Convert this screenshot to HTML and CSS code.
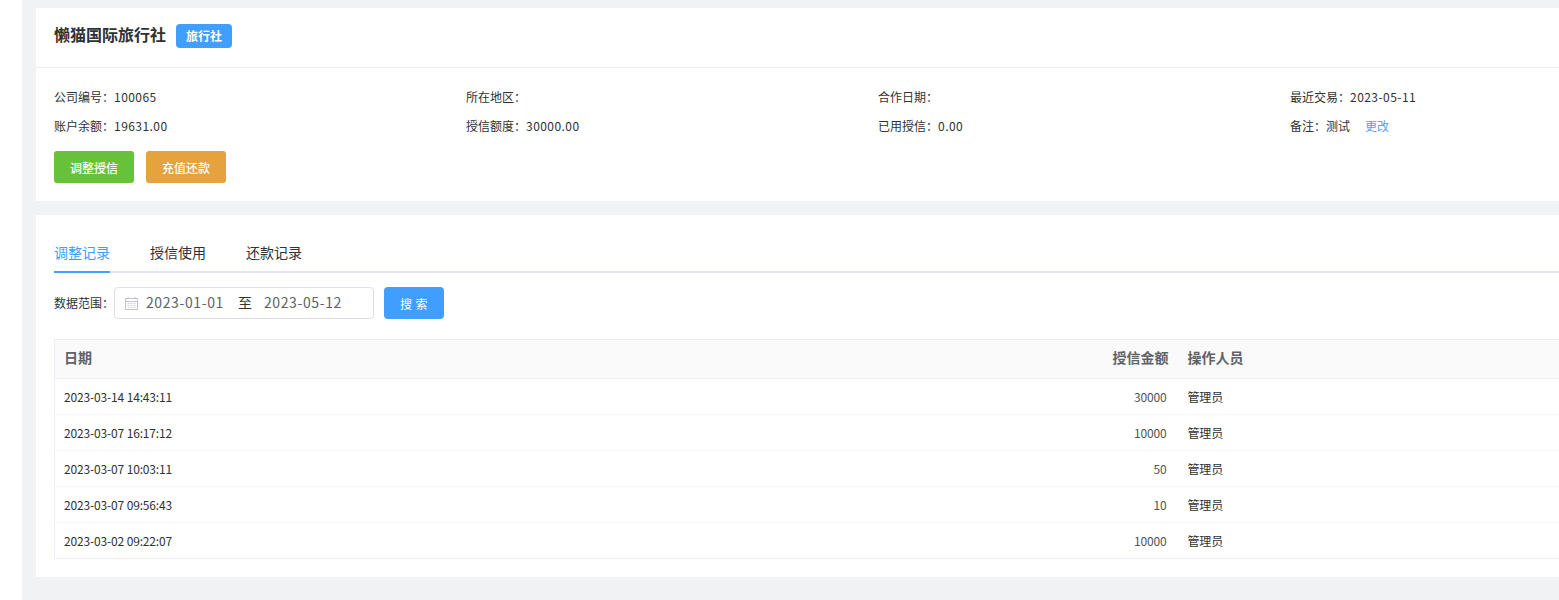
FILE: index.html
```html
<!DOCTYPE html>
<html lang="zh">
<head>
<meta charset="utf-8">
<title>懒猫国际旅行社</title>
<link rel="stylesheet" href="styles.css">
</head>
<body>
<div class="app">
  <aside class="side"></aside>
  <main class="main">
    <section class="card info">
      <header class="head">
        <h1 class="name">懒猫国际旅行社</h1>
        <span class="tag">旅行社</span>
      </header>
      <div class="body">
        <div class="grid">
          <div class="item">公司编号：<span class="val">100065</span></div>
          <div class="item">所在地区：</div>
          <div class="item">合作日期：</div>
          <div class="item">最近交易：<span class="val">2023-05-11</span></div>
          <div class="item">账户余额：<span class="val">19631.00</span></div>
          <div class="item">授信额度：<span class="val">30000.00</span></div>
          <div class="item">已用授信：<span class="val">0.00</span></div>
          <div class="item">备注：测试<a class="link">更改</a></div>
        </div>
        <div class="actions">
          <button class="btn green">调整授信</button>
          <button class="btn orange">充值还款</button>
        </div>
      </div>
    </section>
    <section class="card records">
      <nav class="tabs">
        <a class="tab active">调整记录</a>
        <a class="tab">授信使用</a>
        <a class="tab">还款记录</a>
      </nav>
      <form class="filter">
        <label class="filter-label">数据范围：</label>
        <div class="range">
          <svg class="cal" width="13" height="13" viewBox="0 0 13 13" fill="none" stroke="#c0c4cc">
            <rect x="0.5" y="1.5" width="12" height="11"/>
            <path d="M0.5 4.5h12"/>
            <path d="M3 0v2M10 0v2" />
            <path d="M2.5 6.5h2M5.5 6.5h2M8.5 6.5h2M2.5 8.5h2M5.5 8.5h2M8.5 8.5h2M2.5 10.5h2M5.5 10.5h2M8.5 10.5h2" stroke-width="0.8"/>
          </svg>
          <span class="date">2023-01-01</span>
          <span class="sep">至</span>
          <span class="date">2023-05-12</span>
        </div>
        <button type="button" class="search">搜 索</button>
      </form>
      <table class="table">
        <colgroup>
          <col class="c1"><col class="c2"><col class="c3">
        </colgroup>
        <thead>
          <tr><th>日期</th><th class="num">授信金额</th><th>操作人员</th></tr>
        </thead>
        <tbody>
          <tr><td>2023-03-14 14:43:11</td><td class="num">30000</td><td>管理员</td></tr>
          <tr><td>2023-03-07 16:17:12</td><td class="num">10000</td><td>管理员</td></tr>
          <tr><td>2023-03-07 10:03:11</td><td class="num">50</td><td>管理员</td></tr>
          <tr><td>2023-03-07 09:56:43</td><td class="num">10</td><td>管理员</td></tr>
          <tr><td>2023-03-02 09:22:07</td><td class="num">10000</td><td>管理员</td></tr>
        </tbody>
      </table>
    </section>
  </main>
</div>
</body>
</html>
```
FILE: styles.css
```css
* { box-sizing: border-box; }
html, body { margin: 0; height: 100%; overflow: hidden; }
body {
  font-family: "Noto Sans CJK SC", "Open Sans", sans-serif;
  font-size: 12px;
  color: #303133;
  background: #fff;
}
.app { display: flex; height: 600px; }
.side { flex: 0 0 22px; background: #fff; }
.main {
  flex: 1;
  min-width: 0;
  overflow: hidden;
  background: #f1f2f4;
  padding: 8px 0 0 14px;
}
.card { width: 1684px; background: #fff; }
.info { height: 193px; }
.head {
  height: 60px;
  border-bottom: 1px solid #ebeef5;
  padding: 0 18px 4px;
  display: flex;
  align-items: center;
  gap: 10px;
}
.name { margin: 0 0 4px; font-size: 16px; line-height: 24px; font-weight: 700; color: #303133; }
.tag {
  width: 56px;
  height: 24px;
  border-radius: 4px;
  background: #409eff;
  color: #fff;
  font-size: 12px;
  font-weight: 700;
  line-height: 24px;
  text-align: center;
}
.body { padding: 14px 18px 0; }
.grid { display: grid; grid-template-columns: repeat(4, 412px); grid-auto-rows: 29px; }
.item { font-size: 12px; line-height: 29px; color: #303133; white-space: nowrap; }
.val { letter-spacing: 0.45px; }
.link { margin-left: 15px; color: #5a9cf8; }
.actions { display: flex; gap: 12px; margin-top: 11px; }
.btn {
  width: 80px;
  height: 32px;
  border: 0;
  border-radius: 3px;
  color: #fff;
  font: inherit;
  font-size: 12px;
  font-weight: 500;
  padding: 0;
}
.green { background: #67c23a; }
.orange { background: #e6a23c; }
.records { margin-top: 14px; height: 362px; padding: 24px 18px 0; }
.tabs {
  display: flex;
  gap: 40px;
  height: 34px;
  border-bottom: 2px solid #e4e7ed;
  width: 1648px;
}
.tab {
  height: 34px;
  line-height: 26px;
  font-size: 14px;
  color: #303133;
}
.tab.active { color: #409eff; border-bottom: 2px solid #409eff; }
.filter { display: flex; align-items: center; margin-top: 14px; height: 32px; }
.filter-label { width: 60px; font-size: 12px; white-space: nowrap; padding-bottom: 2px; }
.range {
  width: 260px;
  height: 32px;
  border: 1px solid #dcdfe6;
  border-radius: 4px;
  display: flex;
  align-items: center;
  padding: 0 0 2px 10px;
  font-size: 14px;
  color: #606266;
}
.cal { margin: 2px 8px 0 0; }
.date { width: 80px; white-space: nowrap; letter-spacing: 0.6px; }
.sep { width: 38px; text-align: center; color: #303133; }
.search {
  margin-left: 10px;
  width: 60px;
  height: 32px;
  border: 0;
  border-radius: 4px;
  background: #409eff;
  color: #fff;
  font: inherit;
  font-size: 12px;
  letter-spacing: 0.5px;
  padding: 0;
}
.table {
  margin-top: 20px;
  width: 1648px;
  table-layout: fixed;
  border-collapse: collapse;
  border: 1px solid #ebeef5;
}
.c1 { width: 1048px; }
.c2 { width: 76px; }
th {
  height: 39px;
  padding: 0 10px 4px 9px;
  background: #fafafa;
  border-bottom: 1px solid #ebeef5;
  font-size: 14px;
  font-weight: 700;
  color: #606266;
  text-align: left;
}
td {
  height: 36px;
  padding: 0 10px 0 9px;
  border-bottom: 1px solid #f5f7fa;
  font-size: 12px;
  color: #303133;
  white-space: nowrap;
  letter-spacing: -0.15px;
}
tbody tr:last-child td { border-bottom: 0; }
th.num { text-align: right; }
td.num { text-align: right; padding-right: 12px; color: #505358; }
```
